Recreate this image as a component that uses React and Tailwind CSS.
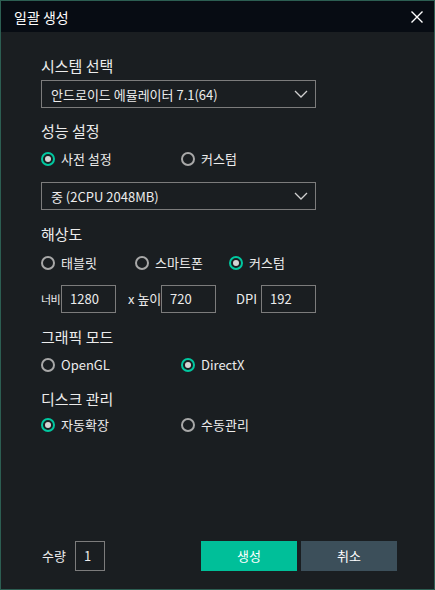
import React from "react";

const font = { fontFamily: '"Noto Sans CJK KR", "Noto Sans", sans-serif' };

function Radio({ checked, label, className = "" }) {
  return (
    <div className={"flex items-center h-[20px] " + className}>
      <span
        className={
          "w-[14px] h-[14px] rounded-full border-2 flex items-center justify-center shrink-0 " +
          (checked ? "border-[#00c8a0]" : "border-[#a8a8a8]")
        }
      >
        {checked && <span className="w-[6px] h-[6px] rounded-full bg-[#d4d4d4]" />}
      </span>
      <span className="ml-[6px] text-[13px] text-[#ececec] leading-[20px]">{label}</span>
    </div>
  );
}

function Select({ value }) {
  return (
    <div className="w-[275px] h-[28px] border border-[#7c7c7c] flex items-center justify-between pl-[9px] pr-[7px]">
      <span className="text-[13px] text-[#ececec] leading-none">{value}</span>
      <svg width="14" height="8" viewBox="0 0 14 8" fill="none">
        <path d="M1 1 L7 7 L13 1" stroke="#d0d0d0" strokeWidth="1.3" />
      </svg>
    </div>
  );
}

function Box({ value, w = "w-[55px]" }) {
  return (
    <div className={"h-[28px] border border-[#7c7c7c] flex items-center pl-[8px] text-[13px] text-[#ececec] shrink-0 " + w}>
      {value}
    </div>
  );
}

function Label({ children, className = "" }) {
  return <div className={"text-[15px] leading-[20px] text-[#ececec] " + className}>{children}</div>;
}

export default function App() {
  return (
    <div style={font} className="w-[435px] h-[590px] border border-[#2c5e52] bg-[#1a1e21] flex flex-col">
      <div className="h-[31px] bg-[#070c13] flex items-center justify-between pl-[13px] pr-[10px] shrink-0">
        <span className="text-[14px] text-white leading-none">일괄 생성</span>
        <svg width="14" height="14" viewBox="0 0 14 14">
          <path d="M1.5 1.5 L12.5 12.5 M12.5 1.5 L1.5 12.5" stroke="#ffffff" strokeWidth="1.4" />
        </svg>
      </div>
      <div className="flex-1 flex flex-col pl-[40px] pb-[18px]">
        <Label className="mt-[24px]">시스템 선택</Label>
        <div className="mt-[4px]">
          <Select value="안드로이드 에뮬레이터 7.1(64)" />
        </div>
        <Label className="mt-[13px]">성능 설정</Label>
        <div className="mt-[8px] flex">
          <Radio checked label="사전 설정" className="w-[140px]" />
          <Radio label="커스텀" />
        </div>
        <div className="mt-[13px]">
          <Select value="중 (2CPU 2048MB)" />
        </div>
        <Label className="mt-[14px]">해상도</Label>
        <div className="mt-[9px] flex">
          <Radio label="태블릿" className="w-[94px]" />
          <Radio label="스마트폰" className="w-[94px]" />
          <Radio checked label="커스텀" />
        </div>
        <div className="mt-[12px] flex items-center">
          <div className="w-[20px] whitespace-nowrap text-[11px] tracking-[-0.5px] text-[#ececec]">너비</div>
          <Box value="1280" />
          <div className="w-[45px] overflow-hidden whitespace-nowrap text-[13px] text-[#ececec] pl-[12px]">x 높이</div>
          <Box value="720" />
          <div className="w-[45px] whitespace-nowrap text-[13px] text-[#ececec] pl-[20px]">DPI</div>
          <Box value="192" />
        </div>
        <Label className="mt-[14px]">그래픽 모드</Label>
        <div className="mt-[8px] flex">
          <Radio label="OpenGL" className="w-[140px]" />
          <Radio checked label="DirectX" />
        </div>
        <Label className="mt-[14px]">디스크 관리</Label>
        <div className="mt-[6px] flex">
          <Radio checked label="자동확장" className="w-[140px]" />
          <Radio label="수동관리" />
        </div>
        <div className="mt-auto flex items-center">
          <span className="text-[13px] text-[#ececec] ml-[1px] w-[33px]">수량</span>
          <div className="w-[30px] h-[30px] border border-[#7c7c7c] flex items-center pl-[8px] text-[13px] text-[#ececec]">1</div>
          <button className="ml-[96px] w-[96px] h-[30px] bg-[#00bf99] text-[13px] text-white">생성</button>
          <button className="ml-[4px] w-[96px] h-[30px] bg-[#3c4f5a] text-[13px] text-white">취소</button>
        </div>
      </div>
    </div>
  );
}
